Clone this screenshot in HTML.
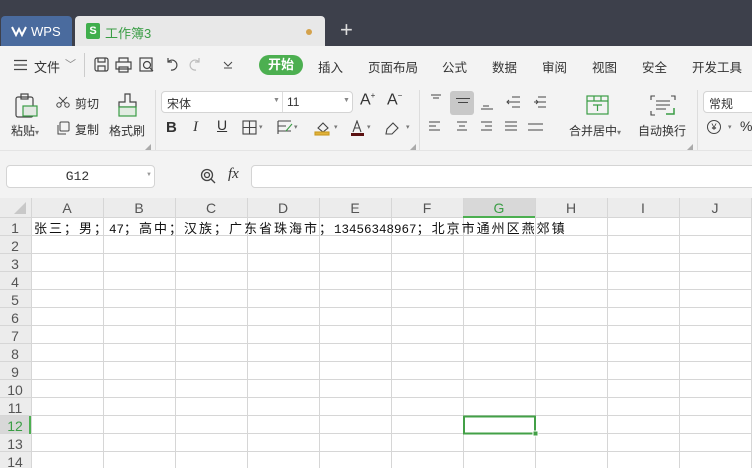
<!DOCTYPE html>
<html><head><meta charset="utf-8"><style>
*{margin:0;padding:0;box-sizing:border-box}
body{width:752px;height:468px;overflow:hidden;background:#fff;font-family:"Liberation Sans","Noto Sans CJK SC",sans-serif;font-size:12px;color:#333;position:relative}
.a{position:absolute;white-space:nowrap}
svg{position:absolute}
.c{font-family:"Noto Sans CJK SC",sans-serif;font-size:13px;letter-spacing:2px}
.d{font-family:"Liberation Mono",monospace;font-size:12.5px;letter-spacing:0}
</style></head><body>
<div class="a" style="left:0;top:0;width:752px;height:46px;background:#3d404b"></div>
<div class="a" style="left:1px;top:16px;width:71px;height:30px;background:#4a6b9e;border-radius:4px 4px 0 0"></div>
<svg style="left:11px;top:25px" width="16" height="12" viewBox="0 0 16 12"><path d="M1 2 L5 10 L8 4 L11 10 L15 2" fill="none" stroke="#fff" stroke-width="2"/></svg>
<div class="a" style="left:31px;top:24px;color:#fff;font-size:13px">WPS</div>
<div class="a" style="left:75px;top:16px;width:250px;height:30px;background:#e8e8e8;border-radius:4px 4px 0 0"></div>
<div class="a" style="left:86px;top:23px;width:14px;height:16px;background:#3fae4c;border-radius:2px;color:#fff;font-size:11px;font-weight:bold;text-align:center;line-height:16px">S</div>
<div class="a" style="left:105px;top:23px;color:#3a9d45;font-size:13px">工作簿3</div>
<div class="a" style="left:306px;top:29px;width:6px;height:6px;border-radius:3px;background:#d4a24c"></div>
<div class="a" style="left:340px;top:17px;color:#ddd;font-size:22px">+</div>
<div class="a" style="left:0;top:46px;width:752px;height:114px;background:#f3f3f3"></div>
<svg style="left:14px;top:59px" width="14" height="12"><path d="M0 1.5H13M0 6H13M0 10.5H13" stroke="#444" stroke-width="1.2"/></svg>
<div class="a" style="left:34px;top:57px;font-size:13px">文件</div>
<div class="a" style="left:65px;top:56px;color:#888;font-size:11px">﹀</div>
<div class="a" style="left:84px;top:53px;width:1px;height:24px;background:#ccc"></div>
<svg style="left:94px;top:57px" width="140" height="16" viewBox="0 0 140 16" fill="none" stroke="#444" stroke-width="1.2"><rect x="1" y="1" width="13" height="13" rx="2"/><path d="M4 1V5H11V1M4 14V9H11V14"/><path d="M25 5V1H34V5M22 5H37V12H22ZM25 10H34V15H25Z"/><rect x="46" y="1" width="12" height="13"/><circle cx="53" cy="8" r="3.5"/><path d="M55.5 10.5L59 14"/><path d="M77 13A5 5 0 1 0 74 5M74 1V5H78"/><path d="M102 13A5 5 0 1 1 105 5M105 1V5H101" stroke="#bbb"/><path d="M130 5L134 9 138 5M130 11H138" stroke-width="1"/></svg>
<div class="a" style="left:259px;top:55px;width:44px;height:20px;background:#4caf50;border-radius:10px;color:#fff;text-align:center;line-height:20px;font-size:13px;font-weight:bold">开始</div>
<div class="a" style="left:318px;top:57px;font-size:12.5px">插入</div>
<div class="a" style="left:368px;top:57px;font-size:12.5px">页面布局</div>
<div class="a" style="left:442px;top:57px;font-size:12.5px">公式</div>
<div class="a" style="left:492px;top:57px;font-size:12.5px">数据</div>
<div class="a" style="left:542px;top:57px;font-size:12.5px">审阅</div>
<div class="a" style="left:592px;top:57px;font-size:12.5px">视图</div>
<div class="a" style="left:642px;top:57px;font-size:12.5px">安全</div>
<div class="a" style="left:692px;top:57px;font-size:12.5px">开发工具</div>
<svg style="left:14px;top:93px" width="26" height="26" fill="none" stroke="#444" stroke-width="1.2"><rect x="2" y="4" width="17" height="20" rx="2"/><rect x="7" y="1" width="7" height="5"/><rect x="9" y="13" width="14" height="10" fill="#e2e8e2" stroke="#3a9d45"/></svg>
<div class="a" style="left:11px;top:122px;font-size:12px">粘贴<span style="font-size:8px;color:#777">▾</span></div>
<svg style="left:56px;top:96px" width="14" height="12" stroke="#444" fill="none"><circle cx="3" cy="9" r="2.2"/><circle cx="11" cy="9" r="2.2"/><path d="M4.5 7.5L11 1M9.5 7.5L3 1"/></svg>
<div class="a" style="left:75px;top:95px">剪切</div>
<svg style="left:56px;top:121px" width="14" height="14" stroke="#444" fill="none"><rect x="4" y="1" width="9" height="9" rx="1"/><path d="M2 4V13H10"/></svg>
<div class="a" style="left:75px;top:121px">复制</div>
<svg style="left:116px;top:93px" width="24" height="26" fill="none" stroke="#444" stroke-width="1.2"><path d="M9 1H14V9H20V14H3V9H9Z"/><rect x="3" y="14" width="17" height="9" fill="#e2ece2" stroke="#3a9d45"/></svg>
<div class="a" style="left:109px;top:122px">格式刷</div>
<div class="a" style="left:144px;top:143px;color:#aaa;font-size:7px">◢</div>
<div class="a" style="left:155px;top:90px;width:1px;height:60px;background:#ddd"></div>
<div class="a" style="left:161px;top:91px;width:192px;height:22px;background:#fff;border:1px solid #d4d4d4;border-radius:4px"></div>
<div class="a" style="left:282px;top:92px;width:1px;height:20px;background:#ddd"></div>
<div class="a" style="left:167px;top:95px">宋体</div>
<div class="a" style="left:273px;top:97px;font-size:7px;color:#888">▼</div>
<div class="a" style="left:287px;top:95px">11</div>
<div class="a" style="left:343px;top:97px;font-size:7px;color:#888">▼</div>
<div class="a" style="left:360px;top:91px;font-size:16px">A<sup style="font-size:8px">+</sup></div>
<div class="a" style="left:387px;top:91px;font-size:16px">A<sup style="font-size:8px">−</sup></div>
<div class="a" style="left:166px;top:119px;font-size:15px;font-weight:bold">B</div>
<div class="a" style="left:193px;top:119px;font-size:15px;font-style:italic;font-family:'Liberation Serif',serif">I</div>
<div class="a" style="left:217px;top:117px;font-size:14px;text-decoration:underline">U</div>
<svg style="left:242px;top:120px" width="170" height="18" fill="none" stroke="#444" stroke-width="1.1"><rect x="1" y="1" width="13" height="13"/><path d="M7.5 1V14M1 7.5H14"/><path d="M36 1H49M36 6H44M36 11H49M36 1V14" /><path d="M44 11L50 4" stroke="#3a9d45"/><path d="M76 8L81 3 86 8 81 12Z"/><rect x="73" y="12" width="14" height="3" fill="#e0b23a" stroke="#c99a20"/><path d="M111 12L115 1 119 12M112.5 8H117.5"/><rect x="109" y="13" width="13" height="3" fill="#5a1010" stroke="none"/><path d="M145 9L151 3 156 8 150 14H144Z"/></svg>
<div class="a" style="left:259px;top:123px;font-size:7px;color:#777">▾</div>
<div class="a" style="left:294px;top:123px;font-size:7px;color:#777">▾</div>
<div class="a" style="left:334px;top:123px;font-size:7px;color:#777">▾</div>
<div class="a" style="left:367px;top:123px;font-size:7px;color:#777">▾</div>
<div class="a" style="left:406px;top:123px;font-size:7px;color:#777">▾</div>
<div class="a" style="left:409px;top:143px;color:#aaa;font-size:7px">◢</div>
<div class="a" style="left:419px;top:90px;width:1px;height:60px;background:#ddd"></div>
<div class="a" style="left:450px;top:91px;width:24px;height:24px;background:#c8c8c8;border-radius:3px"></div>
<svg style="left:428px;top:94px" width="125" height="45" fill="none" stroke="#444" stroke-width="1"><path d="M3 1H13M5 4H11M28 4.5H42M30 8.5H40M55 12H61M53 15H65"/><path d="M84 3H92M84 8H92M84 13H92M80 8H84M81 6L79 8 81 10"/><path d="M110 3H118M110 8H118M110 13H118M106 8H110M108 6L110 8 108 10"/><path d="M1 28H12M1 32H8M1 36H12M29 28H39M31 32H37M29 36H39M53 28H64M57 32H64M53 36H64M77 28H89M77 32H89M77 36H89M100 30H115M100 36H115"/></svg>
<svg style="left:586px;top:95px" width="24" height="22" fill="none" stroke="#3a9d45" stroke-width="1.2"><rect x="1" y="1" width="21" height="18"/><path d="M1 6H22M8 1V6M15 1V6M7 10H16M11.5 10V16"/></svg>
<div class="a" style="left:569px;top:122px">合并居中<span style="font-size:8px;color:#777">▾</span></div>
<svg style="left:650px;top:95px" width="26" height="22" fill="none" stroke="#444" stroke-width="1.1"><path d="M1 5V1H5M21 1H25V5M1 16V20H5"/><path d="M6 6H20M6 10H20M6 14H16"/><path d="M24 13V19H16" stroke="#3a9d45" stroke-width="1.5"/></svg>
<div class="a" style="left:638px;top:122px">自动换行</div>
<div class="a" style="left:686px;top:143px;color:#aaa;font-size:7px">◢</div>
<div class="a" style="left:697px;top:90px;width:1px;height:60px;background:#ddd"></div>
<div class="a" style="left:703px;top:91px;width:60px;height:22px;background:#fff;border:1px solid #d4d4d4;border-radius:4px"></div>
<div class="a" style="left:709px;top:95px">常规</div>
<div class="a" style="left:707px;top:120px;width:14px;height:14px;border:1px solid #444;border-radius:7px;font-size:9px;text-align:center;line-height:12px">¥</div>
<div class="a" style="left:728px;top:123px;font-size:7px;color:#777">▾</div>
<div class="a" style="left:740px;top:118px;font-size:14px">%</div>
<div class="a" style="left:0;top:150px;width:752px;height:48px;background:#f3f3f3;border-top:1px solid #e4e4e4"></div>
<div class="a" style="left:6px;top:165px;width:149px;height:23px;background:#fff;border:1px solid #d4d4d4;border-radius:4px;font-family:'Liberation Mono',monospace;font-size:13px;text-align:center;line-height:21px;padding-right:6px">G12</div>
<div class="a" style="left:146px;top:172px;font-size:6px;color:#999">▼</div>
<svg style="left:200px;top:168px" width="18" height="18" fill="none" stroke="#444" stroke-width="1.3"><circle cx="7" cy="7" r="5.5"/><circle cx="7" cy="7" r="2.5"/><path d="M11 11L15 15"/></svg>
<div class="a" style="left:228px;top:166px;font-size:15px;font-style:italic;font-family:'Liberation Serif',serif">fx</div>
<div class="a" style="left:251px;top:165px;width:510px;height:23px;background:#fff;border:1px solid #d4d4d4;border-radius:4px"></div>
<svg style="left:0;top:198px" width="752" height="270">
<rect x="0" y="0" width="752" height="20" fill="#ececec"/>
<rect x="0" y="0" width="31" height="270" fill="#ececec"/>
<rect x="463" y="0" width="72" height="20" fill="#d8d8d8"/>
<rect x="0" y="218" width="31" height="18" fill="#d8d8d8"/>
<path d="M26 4V16H14Z" fill="#c8c8c8"/>
<g stroke="#d6d6d6" stroke-width="1">
<path d="M0 19.5H752M31.5 0V270"/>
<path d="M103.5 0V270M175.5 0V270M247.5 0V270M319.5 0V270M391.5 0V270M463.5 0V270M535.5 0V270M607.5 0V270M679.5 0V270M751.5 0V270"/>
<path d="M0 37.5H752M0 55.5H752M0 73.5H752M0 91.5H752M0 109.5H752M0 127.5H752M0 145.5H752M0 163.5H752M0 181.5H752M0 199.5H752M0 217.5H752M0 235.5H752M0 253.5H752"/>
</g>
<rect x="463" y="18" width="72" height="2" fill="#4caf50"/>
<rect x="29" y="218" width="2" height="18" fill="#4caf50"/>
<rect x="464" y="218.5" width="71" height="17" fill="none" stroke="#43a047" stroke-width="2"/>
<rect x="533" y="233" width="5" height="5" fill="#43a047" stroke="#fff" stroke-width="1"/>
<g font-family="Liberation Sans" font-size="14" fill="#555" text-anchor="middle">
<text x="67" y="15">A</text><text x="139" y="15">B</text><text x="211" y="15">C</text><text x="283" y="15">D</text><text x="355" y="15">E</text><text x="427" y="15">F</text><text x="499" y="15" fill="#3a9d45">G</text><text x="571" y="15">H</text><text x="643" y="15">I</text><text x="715" y="15">J</text>
</g>
<g font-family="Liberation Sans" font-size="14" fill="#555" text-anchor="middle">
<text x="15" y="35">1</text><text x="15" y="53">2</text><text x="15" y="71">3</text><text x="15" y="89">4</text><text x="15" y="107">5</text><text x="15" y="125">6</text><text x="15" y="143">7</text><text x="15" y="161">8</text><text x="15" y="179">9</text><text x="15" y="197">10</text><text x="15" y="215">11</text><text x="15" y="233" fill="#3a9d45">12</text><text x="15" y="251">13</text><text x="15" y="269">14</text>
</g>
</svg>
<div class="a" style="left:34px;top:219px;color:#111;line-height:17px"><span class="c">张三；男；</span><span class="d">47</span><span class="c">；高中；汉族；广东省珠海市；</span><span class="d">13456348967</span><span class="c">；北京市通州区燕郊镇</span></div>
</body></html>
